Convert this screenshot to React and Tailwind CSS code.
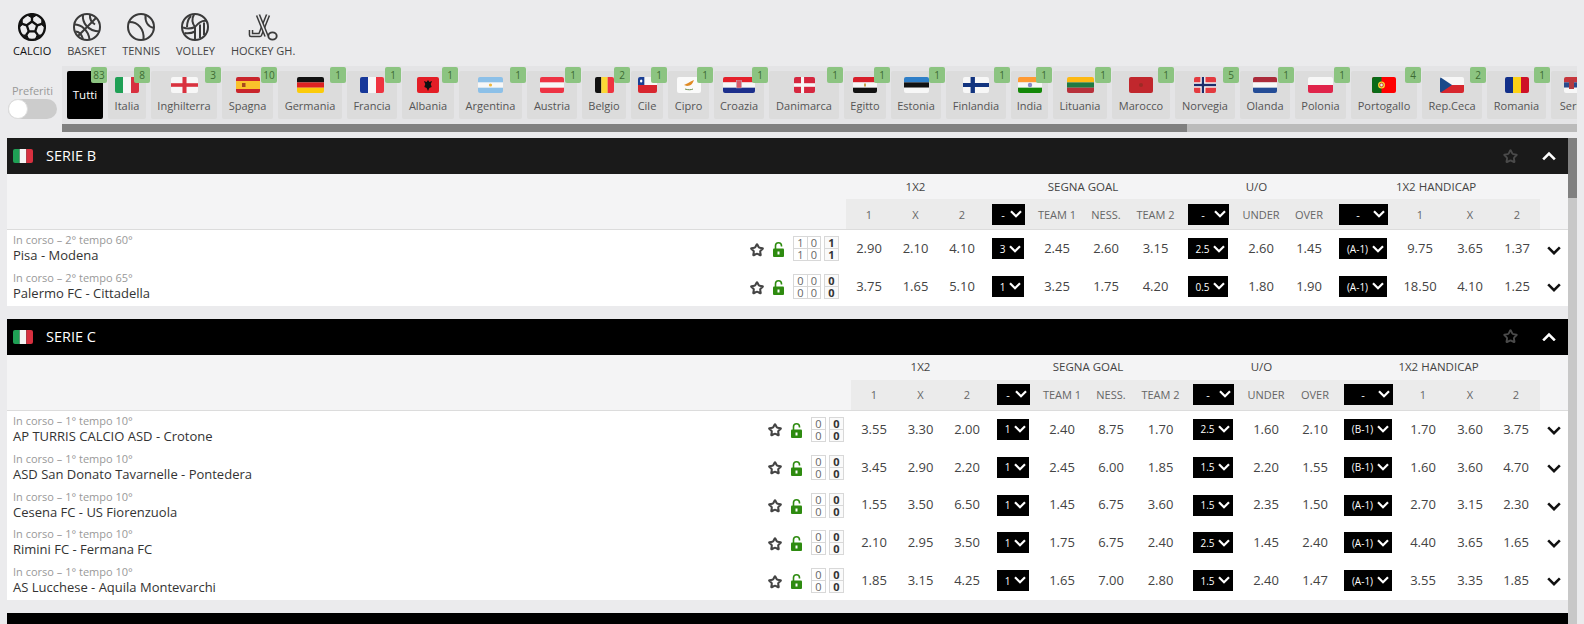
import { Star } from 'lucide-react';

const gridB = "grid grid-cols-[839px_46px_47px_46px_47px_50px_48px_51px_55px_50px_46px_62px_52px_48px_46px_28px]";
const gridC = "grid grid-cols-[844px_46px_47px_46px_47px_50px_48px_51px_53px_54px_44px_61px_50px_44px_48px_28px]";

const countries = [
    { name: "Italia", count: 8, w: 24, tab: 38 },
    { name: "Inghilterra", count: 3, w: 27, tab: 66 },
    { name: "Spagna", count: 10, w: 24, tab: 51 },
    { name: "Germania", count: 1, w: 27, tab: 64 },
    { name: "Francia", count: 1, w: 24, tab: 50 },
    { name: "Albania", count: 1, w: 22, tab: 52 },
    { name: "Argentina", count: 1, w: 25, tab: 63 },
    { name: "Austria", count: 1, w: 24, tab: 50 },
    { name: "Belgio", count: 2, w: 19, tab: 44 },
    { name: "Cile", count: 1, w: 19, tab: 32 },
    { name: "Cipro", count: 1, w: 24, tab: 41 },
    { name: "Croazia", count: 1, w: 32, tab: 50 },
    { name: "Danimarca", count: 1, w: 21, tab: 70 },
    { name: "Egitto", count: 1, w: 24, tab: 42 },
    { name: "Estonia", count: 1, w: 25, tab: 50 },
    { name: "Finlandia", count: 1, w: 26, tab: 60 },
    { name: "India", count: 1, w: 24, tab: 37 },
    { name: "Lituania", count: 1, w: 27, tab: 54 },
    { name: "Marocco", count: 1, w: 24, tab: 58 },
    { name: "Norvegia", count: 5, w: 22, tab: 60 },
    { name: "Olanda", count: 1, w: 24, tab: 50 },
    { name: "Polonia", count: 1, w: 25, tab: 51 },
    { name: "Portogallo", count: 4, w: 24, tab: 66 },
    { name: "Rep.Ceca", count: 2, w: 24, tab: 60 },
    { name: "Romania", count: 1, w: 24, tab: 59 },
    { name: "Serbia", count: 1, w: 24, tab: 50 },
];

const sections = [
    {
        title: "SERIE B",
        grid: gridB,
        headerBg: "bg-[#1a1a1a]",
        rows: [
            { status: "In corso – 2° tempo 60°", name: "Pisa - Modena", score: [["1", "0", "1"], ["1", "0", "1"]], odds: ["2.90", "2.10", "4.10"], sel1: "3", goal: ["2.45", "2.60", "3.15"], sel2: "2.5", uo: ["2.60", "1.45"], sel3: "(A-1)", hc: ["9.75", "3.65", "1.37"] },
            { status: "In corso – 2° tempo 65°", name: "Palermo FC - Cittadella", score: [["0", "0", "0"], ["0", "0", "0"]], odds: ["3.75", "1.65", "5.10"], sel1: "1", goal: ["3.25", "1.75", "4.20"], sel2: "0.5", uo: ["1.80", "1.90"], sel3: "(A-1)", hc: ["18.50", "4.10", "1.25"] },
        ],
    },
    {
        title: "SERIE C",
        grid: gridC,
        headerBg: "bg-black",
        rows: [
            { status: "In corso – 1° tempo 10°", name: "AP TURRIS CALCIO ASD - Crotone", score: [["0", "0"], ["0", "0"]], odds: ["3.55", "3.30", "2.00"], sel1: "1", goal: ["2.40", "8.75", "1.70"], sel2: "2.5", uo: ["1.60", "2.10"], sel3: "(B-1)", hc: ["1.70", "3.60", "3.75"] },
            { status: "In corso – 1° tempo 10°", name: "ASD San Donato Tavarnelle - Pontedera", score: [["0", "0"], ["0", "0"]], odds: ["3.45", "2.90", "2.20"], sel1: "1", goal: ["2.45", "6.00", "1.85"], sel2: "1.5", uo: ["2.20", "1.55"], sel3: "(B-1)", hc: ["1.60", "3.60", "4.70"] },
            { status: "In corso – 1° tempo 10°", name: "Cesena FC - US Fiorenzuola", score: [["0", "0"], ["0", "0"]], odds: ["1.55", "3.50", "6.50"], sel1: "1", goal: ["1.45", "6.75", "3.60"], sel2: "1.5", uo: ["2.35", "1.50"], sel3: "(A-1)", hc: ["2.70", "3.15", "2.30"] },
            { status: "In corso – 1° tempo 10°", name: "Rimini FC - Fermana FC", score: [["0", "0"], ["0", "0"]], odds: ["2.10", "2.95", "3.50"], sel1: "1", goal: ["1.75", "6.75", "2.40"], sel2: "2.5", uo: ["1.45", "2.40"], sel3: "(A-1)", hc: ["4.40", "3.65", "1.65"] },
            { status: "In corso – 1° tempo 10°", name: "AS Lucchese - Aquila Montevarchi", score: [["0", "0"], ["0", "0"]], odds: ["1.85", "3.15", "4.25"], sel1: "1", goal: ["1.65", "7.00", "2.80"], sel2: "1.5", uo: ["2.40", "1.47"], sel3: "(A-1)", hc: ["3.55", "3.35", "1.85"] },
        ],
    },
];

function FlagShapes({ name }) {
    switch (name) {
        case "Italia":
            return <><rect width="8" height="16" fill="#1fa055" /><rect x="8" width="8" height="16" fill="#f5f5f5" /><rect x="16" width="8" height="16" fill="#d8303f" /></>;
        case "Inghilterra":
            return <><rect width="24" height="16" fill="#f7f7f7" /><rect x="10.2" width="3.6" height="16" fill="#d9323f" /><rect y="6.2" width="24" height="3.6" fill="#d9323f" /></>;
        case "Spagna":
            return <><rect width="24" height="16" fill="#c9252c" /><rect y="4" width="24" height="8" fill="#fac22b" /><rect x="6" y="6" width="3.5" height="4" fill="#a8481d" /></>;
        case "Germania":
            return <><rect width="24" height="5.4" fill="#111" /><rect y="5.4" width="24" height="5.3" fill="#dd2222" /><rect y="10.7" width="24" height="5.3" fill="#fbcb0a" /></>;
        case "Francia":
            return <><rect width="8" height="16" fill="#17389a" /><rect x="8" width="8" height="16" fill="#f7f7f7" /><rect x="16" width="8" height="16" fill="#ef3340" /></>;
        case "Albania":
            return <><rect width="24" height="16" fill="#e41e26" /><path d="M12 3l1.5 2 3-1-1.5 3 1 3-2.5 1-1.5 3-1.5-3-2.5-1 1-3-1.5-3 3 1z" fill="#111" /></>;
        case "Argentina":
            return <><rect width="24" height="16" fill="#8cc0e8" /><rect y="5.3" width="24" height="5.4" fill="#f7f7f7" /><circle cx="12" cy="8" r="1.5" fill="#f0b73c" /></>;
        case "Austria":
            return <><rect width="24" height="16" fill="#ee3344" /><rect y="5.3" width="24" height="5.4" fill="#f7f7f7" /></>;
        case "Belgio":
            return <><rect width="8" height="16" fill="#111" /><rect x="8" width="8" height="16" fill="#fbd836" /><rect x="16" width="8" height="16" fill="#ef3340" /></>;
        case "Cile":
            return <><rect width="24" height="8" fill="#f7f7f7" /><rect y="8" width="24" height="8" fill="#d8262f" /><rect width="8" height="8" fill="#1b3f94" /><circle cx="4" cy="4" r="1.5" fill="#fff" /></>;
        case "Cipro":
            return <><rect width="24" height="16" fill="#fafafa" /><path d="M7 8c3-1 5-3 10-5-1 3-3 6-7 6z" fill="#e08a24" /><path d="M8 12c3 1 6 1 8 0" stroke="#6f8f52" strokeWidth="1" fill="none" /></>;
        case "Croazia":
            return <><rect width="24" height="5.4" fill="#e5202a" /><rect y="5.4" width="24" height="5.3" fill="#f7f7f7" /><rect y="10.7" width="24" height="5.3" fill="#1c2f8c" /><rect x="10" y="3.5" width="4" height="7.5" fill="#d95a6a" stroke="#c0c0d0" strokeWidth="0.4" /></>;
        case "Danimarca":
            return <><rect width="24" height="16" fill="#d6273f" /><rect x="8" width="3.5" height="16" fill="#f7f7f7" /><rect y="6.2" width="24" height="3.6" fill="#f7f7f7" /></>;
        case "Egitto":
            return <><rect width="24" height="5.4" fill="#d81f2a" /><rect y="5.4" width="24" height="5.3" fill="#f7f7f7" /><rect y="10.7" width="24" height="5.3" fill="#111" /><rect x="11" y="6.5" width="2" height="3" fill="#c9a24a" /></>;
        case "Estonia":
            return <><rect width="24" height="5.4" fill="#2f7fc8" /><rect y="5.4" width="24" height="5.3" fill="#111" /><rect y="10.7" width="24" height="5.3" fill="#f7f7f7" /></>;
        case "Finlandia":
            return <><rect width="24" height="16" fill="#f7f7f7" /><rect x="7" width="4" height="16" fill="#12347f" /><rect y="6" width="24" height="4" fill="#12347f" /></>;
        case "India":
            return <><rect width="24" height="5.4" fill="#ff9a33" /><rect y="5.4" width="24" height="5.3" fill="#f7f7f7" /><rect y="10.7" width="24" height="5.3" fill="#138808" /><circle cx="12" cy="8" r="2.2" fill="#8a8ac8" /></>;
        case "Lituania":
            return <><rect width="24" height="5.4" fill="#fdb913" /><rect y="5.4" width="24" height="5.3" fill="#1f7a43" /><rect y="10.7" width="24" height="5.3" fill="#b8303a" /></>;
        case "Marocco":
            return <><rect width="24" height="16" fill="#c1272d" /><circle cx="12" cy="8" r="2" fill="#9c2a25" /></>;
        case "Norvegia":
            return <><rect width="24" height="16" fill="#e33a3f" /><rect x="7" width="5.5" height="16" fill="#f7f7f7" /><rect y="5.3" width="24" height="5.4" fill="#f7f7f7" /><rect x="8.5" width="2.5" height="16" fill="#1d2c6b" /><rect y="6.8" width="24" height="2.4" fill="#1d2c6b" /></>;
        case "Olanda":
            return <><rect width="24" height="5.4" fill="#ab2b3a" /><rect y="5.4" width="24" height="5.3" fill="#f7f7f7" /><rect y="10.7" width="24" height="5.3" fill="#244c96" /></>;
        case "Polonia":
            return <><rect width="24" height="8" fill="#f7f7f7" /><rect y="8" width="24" height="8" fill="#e0244a" /></>;
        case "Portogallo":
            return <><rect width="24" height="16" fill="#f00" /><rect width="9.5" height="16" fill="#0b6b18" /><circle cx="9.5" cy="8" r="3.5" fill="#f6d32d" /><circle cx="9.5" cy="8" r="1.8" fill="#e8e8e8" stroke="#c8202a" strokeWidth="0.8" /></>;
        case "Rep.Ceca":
            return <><rect width="24" height="8" fill="#f7f7f7" /><rect y="8" width="24" height="8" fill="#d7262e" /><path d="M0 0l12 8-12 8z" fill="#1b4a8a" /></>;
        case "Romania":
            return <><rect width="8" height="16" fill="#12308a" /><rect x="8" width="8" height="16" fill="#fcd116" /><rect x="16" width="8" height="16" fill="#ce1126" /></>;
        case "Serbia":
            return <><rect width="24" height="5.4" fill="#c6363c" /><rect y="5.4" width="24" height="5.3" fill="#2a4a8c" /><rect y="10.7" width="24" height="5.3" fill="#f7f7f7" /><rect x="5" y="3" width="5" height="9" fill="#b33a3f" /></>;
        default:
            return null;
    }
}

function Flag({ name, w, h = 16 }) {
    return (
        <svg width={w} height={h} viewBox="0 0 24 16" preserveAspectRatio="none" className="block rounded-[2px]">
            <FlagShapes name={name} />
        </svg>
    );
}

function SoccerIcon() {
    return (
        <svg width="28" height="28" viewBox="0 0 28 28" fill="none" stroke="#111" strokeWidth="2.3" strokeLinejoin="round">
            <circle cx="14" cy="14" r="12.9" />
            <path d="M14 8.5l5.2 3.8-2 6.1h-6.4l-2-6.1z" />
            <path d="M14 8.5V4M19.2 12.3l4.6-1.5M17.2 18.4l2.8 3.8M10.8 18.4l-2.8 3.8M8.8 12.3L4.2 10.8" />
            <path d="M10 2.5h8L14 5zM24 7l2.5 7-3-2.5zM22.5 22l-5 3.8 1.5-3.5zM5.5 22l5 3.8-1.5-3.5zM4 7l-2.500 7 3-2.5z" fill="#111" strokeWidth="1" />
        </svg>
    );
}

function BasketIcon() {
    return (
        <svg width="28" height="28" viewBox="0 0 28 28" fill="none" stroke="#3a3a3a" strokeWidth="2">
            <circle cx="14" cy="14" r="13" />
            <path d="M23 5L5 23" />
            <path d="M10 1.5C9 10 15 18 26.5 18.5" />
            <path d="M1.5 11.5C8 11.5 15.5 17 16.5 26.5" />
            <path d="M17 1.5C16.5 6 18 9 22 11.5" />
            <path d="M2.5 18.5C5.5 18.5 8 19.5 10 26" />
        </svg>
    );
}

function TennisIcon() {
    return (
        <svg width="28" height="28" viewBox="0 0 28 28" fill="none" stroke="#3a3a3a" strokeWidth="2">
            <circle cx="14" cy="14" r="13" />
            <path d="M2.5 9C11 9 17.5 16 16.5 26.5" />
            <path d="M18.5 2C18 9 21 14 27 15" />
        </svg>
    );
}

function VolleyIcon() {
    return (
        <svg width="28" height="28" viewBox="0 0 28 28" fill="none" stroke="#3a3a3a" strokeWidth="2">
            <circle cx="14" cy="14" r="13" />
            <path d="M14 14C11 10 11 5 13 1.5" />
            <path d="M14 14C18 9 22 7 26 8" />
            <path d="M14 14V26.5" />
            <path d="M19 11.5V25" />
            <path d="M23 9.5V22" />
            <path d="M14 14C10 16 6 16 2 14.5" />
            <path d="M14 18.5C10 20.5 6.5 20.5 3.5 20" />
            <path d="M10 3C7 6 6 9 6 14" />
        </svg>
    );
}

function HockeyIcon() {
    return (
        <svg width="30" height="28" viewBox="0 0 30 28" fill="none" strokeLinejoin="round">
            <path d="M20 2L12 22H3V17" stroke="#3a3a3a" strokeWidth="4.6" />
            <path d="M20 2L12 22H3V17" stroke="#ebebed" strokeWidth="1.6" />
            <path d="M10 2L18.5 23" stroke="#3a3a3a" strokeWidth="4.6" />
            <path d="M10 2L18.5 23" stroke="#ebebed" strokeWidth="1.6" />
            <ellipse cx="24.5" cy="23" rx="4.2" ry="3.6" fill="#ebebed" stroke="#3a3a3a" strokeWidth="1.9" />
        </svg>
    );
}

function Chevron({ color = "#fff", size = 12, up = false }) {
    return (
        <svg width={size} height={size * 0.7} viewBox="0 0 12 8" fill="none" stroke={color} strokeWidth="2.2">
            <path d={up ? "M1 7l5-5 5 5" : "M1 1l5 5 5-5"} />
        </svg>
    );
}

function Select({ value, width, header }) {
    return (
        <div className={`flex h-[21px] items-center justify-between bg-black pl-1 pr-[3px] text-white ${width} ${header ? "text-[11px]" : "text-[10px]"}`}>
            <span className="flex-1 text-center leading-none">{value}</span>
            <Chevron />
        </div>
    );
}

function LockOpen() {
    return (
        <svg width="11" height="15" viewBox="0 0 11 15" fill="none">
            <path d="M2.5 7V3.8a3 3 0 0 1 6 0V4.5" stroke="#2e8b10" strokeWidth="1.6" />
            <rect y="6.5" width="11" height="8.5" rx="1" fill="#2e8b10" />
            <rect x="4.5" y="9.5" width="2" height="3" fill="#fff" />
        </svg>
    );
}

function ScoreBox({ top, bottom, bold }) {
    return (
        <div className={`flex flex-col border border-[#d8d8d8] text-[11px] leading-none ${bold ? "bg-[#fafafa] font-bold text-[#333]" : "text-[#666]"}`}>
            <div className="flex border-b border-[#d8d8d8]">
                {top.map((v, i) => (
                    <span key={i} className={`flex h-[11px] w-[13px] items-center justify-center ${i > 0 ? "border-l border-[#d8d8d8]" : ""}`}>{v}</span>
                ))}
            </div>
            <div className="flex">
                {bottom.map((v, i) => (
                    <span key={i} className={`flex h-[11px] w-[13px] items-center justify-center ${i > 0 ? "border-l border-[#d8d8d8]" : ""}`}>{v}</span>
                ))}
            </div>
        </div>
    );
}

function Odd({ value }) {
    return <div className="flex items-center justify-center text-[13px] text-[#444]">{value}</div>;
}

function MatchRow({ row, grid }) {
    const top = row.score[0];
    const bottom = row.score[1];
    return (
        <div className={`${grid} h-[37.8px] bg-white`}>
            <div className="flex items-center pl-[6px] pr-[7px]">
                <div className="flex-1">
                    <div className="text-[11px] leading-[14px] text-[#999]">{row.status}</div>
                    <div className="text-[13px] leading-[17px] text-[#333]">{row.name}</div>
                </div>
                <div className="mr-[9px] mt-[2px]"><Star size={14} strokeWidth={3.5} className="block text-[#444]" /></div>
                <div className="mr-[9px] mt-[2px]"><LockOpen /></div>
                <div className="flex gap-[3px]">
                    <ScoreBox top={top.slice(0, -1)} bottom={bottom.slice(0, -1)} />
                    <ScoreBox top={top.slice(-1)} bottom={bottom.slice(-1)} bold />
                </div>
            </div>
            <Odd value={row.odds[0]} />
            <Odd value={row.odds[1]} />
            <Odd value={row.odds[2]} />
            <div className="flex items-center pl-[7px]"><Select value={row.sel1} width="w-[32px]" /></div>
            <Odd value={row.goal[0]} />
            <Odd value={row.goal[1]} />
            <Odd value={row.goal[2]} />
            <div className="flex items-center pl-[7px]"><Select value={row.sel2} width="w-[40px]" /></div>
            <Odd value={row.uo[0]} />
            <Odd value={row.uo[1]} />
            <div className="flex items-center pl-[7px]"><Select value={row.sel3} width="w-[48px]" /></div>
            <Odd value={row.hc[0]} />
            <Odd value={row.hc[1]} />
            <Odd value={row.hc[2]} />
            <div className="flex items-center justify-center pt-[3px]"><Chevron color="#111" size={14} /></div>
        </div>
    );
}

function Section({ section }) {
    const subCell = "flex items-center justify-center bg-[#ebebeb] pt-[2px] text-[11px] text-[#666]";
    return (
        <div className="mb-[13px]">
            <div className={`flex h-[36px] items-center pl-[6px] pr-[12px] text-white ${section.headerBg}`}>
                <Flag name="Italia" w={20} h={14} />
                <span className="ml-[13px] text-[14.5px]">{section.title}</span>
                <Star size={15} strokeWidth={3} className="ml-auto mr-[24px] text-[#4a4a4a]" />
                <Chevron size={14} up />
            </div>
            <div className={`${section.grid} h-[25px] bg-[#f4f4f5] text-[11.5px] text-[#444]`}>
                <div />
                <div className="col-span-3 flex items-center justify-center">1X2</div>
                <div className="col-span-4 flex items-center justify-center">SEGNA GOAL</div>
                <div className="col-span-3 flex items-center justify-center">U/O</div>
                <div className="col-span-4 flex items-center justify-center">1X2 HANDICAP</div>
            </div>
            <div className={`${section.grid} h-[31px] border-b border-[#dcdcdc] bg-[#f4f4f5]`}>
                <div />
                <div className={subCell}>1</div>
                <div className={subCell}>X</div>
                <div className={subCell}>2</div>
                <div className="flex items-center bg-[#ebebeb] pl-[7px]"><Select value="-" width="w-[33px]" header /></div>
                <div className={subCell}>TEAM 1</div>
                <div className={subCell}>NESS.</div>
                <div className={subCell}>TEAM 2</div>
                <div className="flex items-center bg-[#ebebeb] pl-[7px]"><Select value="-" width="w-[41px]" header /></div>
                <div className={subCell}>UNDER</div>
                <div className={subCell}>OVER</div>
                <div className="flex items-center bg-[#ebebeb] pl-[7px]"><Select value="-" width="w-[49px]" header /></div>
                <div className={subCell}>1</div>
                <div className={subCell}>X</div>
                <div className={subCell}>2</div>
                <div />
            </div>
            {section.rows.map((row, index) => (
                <MatchRow key={index} row={row} grid={section.grid} />
            ))}
        </div>
    );
}

function SportItem({ icon, label, active }) {
    return (
        <div className="flex flex-col items-center gap-[3px]">
            {icon}
            <span className={`text-[11px] leading-[13px] ${active ? "text-[#111]" : "text-[#444]"}`}>{label}</span>
        </div>
    );
}

function Badge({ count }) {
    return (
        <span className="absolute -top-[4px] -right-[4px] flex h-[16px] w-[16px] items-center justify-center rounded-[2px] bg-[#8cc481] text-[10px] text-[#3d6b33]">
            {count}
        </span>
    );
}

export default function App() {
    return (
        <div className="flex h-screen flex-col overflow-hidden bg-[#ebebed] font-['Open_Sans',sans-serif]">
            <div className="flex h-[66px] items-start gap-[16px] pl-[13px] pt-[13px]">
                <SportItem icon={<SoccerIcon />} label="CALCIO" active />
                <SportItem icon={<BasketIcon />} label="BASKET" />
                <SportItem icon={<TennisIcon />} label="TENNIS" />
                <SportItem icon={<VolleyIcon />} label="VOLLEY" />
                <SportItem icon={<HockeyIcon />} label="HOCKEY GH." />
            </div>

            <div className="flex">
                <div className="flex w-[62px] flex-col items-center pl-[3px] pt-[18px]">
                    <span className="text-[11px] leading-[14px] text-[#999]">Preferiti</span>
                    <div className="mt-[1px] h-[20px] w-[49px] rounded-full bg-[#cccccc]">
                        <div className="h-[20px] w-[20px] rounded-full border border-[#ddd] bg-white" />
                    </div>
                </div>
                <div className="w-[1515px]">
                    <div className="flex h-[58px] gap-[5px] overflow-hidden bg-[#e4e4e6] pl-[5px] pt-[5px]">
                        <div className="relative flex h-[48px] w-[36px] shrink-0 items-center justify-center rounded-[2px] bg-black text-[11.5px] text-white">
                            Tutti
                            <Badge count={83} />
                        </div>
                        {countries.map((c) => (
                            <div key={c.name} style={{ width: c.tab }} className="relative flex h-[48px] shrink-0 flex-col items-center rounded-[2px] bg-[#dcdcdc] pt-[6px]">
                                <Flag name={c.name} w={c.w} />
                                <span className="mt-[5px] text-[11px] leading-[16px] text-[#555]">{c.name}</span>
                                <Badge count={c.count} />
                            </div>
                        ))}
                    </div>
                    <div className="h-[8px] bg-[#bbbbbb]">
                        <div className="h-full w-[1125px] bg-[#808080]" />
                    </div>
                </div>
            </div>

            <div className="mt-[6px] flex min-h-0 flex-1 overflow-hidden pl-[7px]">
                <div className="w-[1561px] shrink-0">
                    {sections.map((section) => (
                        <Section key={section.title} section={section} />
                    ))}
                    <div className="h-[36px] bg-black" />
                </div>
                <div className="w-[9px] shrink-0 bg-[#c8c8c8]">
                    <div className="h-[60px] bg-[#808080]" />
                </div>
            </div>
        </div>
    );
}
